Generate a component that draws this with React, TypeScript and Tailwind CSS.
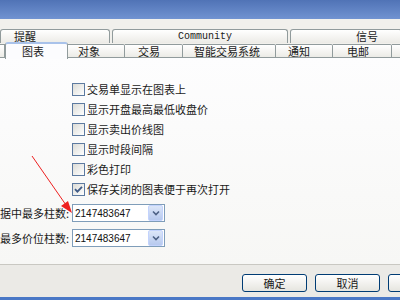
import React from 'react';

const cjk = { fontFamily: '"Noto Sans CJK SC", "Noto Sans", sans-serif' };

const topTabs = [
  { label: '提醒', w: 'w-[110px]', pad: 'pl-[13px]', mono: false },
  { label: 'Community', w: 'w-[176px]', pad: 'pl-[65px]', mono: true },
  { label: '信号', w: 'w-[112px]', pad: 'pl-[65px]', mono: false },
];

const tabs = [
  { label: '图表', w: 'w-[63px]', pad: 'pl-[16px]', active: true },
  { label: '对象', w: 'w-[57px]', pad: 'pl-[10px]', active: false },
  { label: '交易', w: 'w-[58px]', pad: 'pl-[13px]', active: false },
  { label: '智能交易系统', w: 'w-[93px]', pad: 'pl-[11px]', active: false },
  { label: '通知', w: 'w-[57px]', pad: 'pl-[12px]', active: false },
  { label: '电邮', w: 'w-[59px]', pad: 'pl-[14px]', active: false },
  { label: '', w: 'w-[20px]', pad: '', active: false },
];

const options = [
  { label: '交易单显示在图表上', checked: false },
  { label: '显示开盘最高最低收盘价', checked: false },
  { label: '显示卖出价线图', checked: false },
  { label: '显示时段间隔', checked: false },
  { label: '彩色打印', checked: false },
  { label: '保存关闭的图表便于再次打开', checked: true },
];

function Checkbox({ checked }: { checked: boolean }) {
  return (
    <div className="w-[13px] h-[13px] border border-[#5d7aa0] bg-gradient-to-br from-[#dcdcd7] to-white flex items-center justify-center shrink-0">
      {checked && (
        <svg width="9" height="9" viewBox="0 0 9 9">
          <path d="M1 4.2 L3.4 6.6 L8 1.8" stroke="#3f5a85" strokeWidth="1.8" fill="none" />
        </svg>
      )}
    </div>
  );
}

function Combo({ value }: { value: string }) {
  return (
    <div className="w-[93px] h-[18px] border border-[#7f9db9] bg-white flex items-center">
      <span className="flex-1 pl-[2px] text-[10px] text-[#111]" style={{ fontFamily: '"Liberation Sans", Arial, sans-serif' }}>
        {value}
      </span>
      <div className="w-[15px] h-[16px] mr-px rounded-[2px] bg-gradient-to-b from-[#dce6f8] to-[#b7c9ee] border border-[#c3d3fd] flex items-center justify-center">
        <svg width="8" height="6" viewBox="0 0 8 6">
          <path d="M1 1.5 L4 4.5 L7 1.5" stroke="#4d6185" strokeWidth="1.6" fill="none" />
        </svg>
      </div>
    </div>
  );
}

export default function App() {
  return (
    <div className="w-[400px] h-[300px] relative overflow-hidden bg-[#ecebe6] text-[#1a1a1a]" style={cjk}>
      {/* title bar */}
      <div className="h-[19px] bg-gradient-to-b from-[#5073b6] to-[#7193d1]" />
      <div className="h-[10px] bg-[#f1f0ec]" />

      {/* first tab row */}
      <div className="h-[14px] flex gap-[2px] bg-[#f1f0ec]">
        {topTabs.map((t, i) => (
          <div
            key={i}
            className={`${t.w} ${t.pad} shrink-0 h-full border border-b-0 border-[#919b9c] rounded-t-[3px] bg-gradient-to-b from-white to-[#ecebe6] flex items-center text-[11px] leading-none whitespace-nowrap`}
            style={t.mono ? { fontFamily: '"Liberation Mono", monospace', fontSize: '10px' } : undefined}
          >
            {t.label}
          </div>
        ))}
      </div>

      {/* second tab row */}
      <div className="h-[15px] flex items-end bg-[#f1f0ec] relative z-10">
        <div className="w-[5px] h-[14px] border-t border-r border-b border-[#919b9c] bg-gradient-to-b from-white to-[#ecebe6] shrink-0" />
        {tabs.map((t, i) =>
          t.active ? (
            <div
              key={i}
              className={`${t.w} ${t.pad} shrink-0 h-[17px] -mb-px border-x border-t-2 border-x-[#919b9c] border-t-[#a9c2ea] rounded-t-[3px] bg-[#fcfcfe] flex items-center text-[11px] leading-none`}
            >
              {t.label}
            </div>
          ) : (
            <div
              key={i}
              className={`${t.w} ${t.pad} shrink-0 h-[14px] border border-l-0 border-[#919b9c] rounded-tr-[2px] bg-gradient-to-b from-white to-[#ecebe6] flex items-center text-[11px] leading-none whitespace-nowrap`}
            >
              {t.label}
            </div>
          )
        )}
      </div>

      {/* tab page */}
      <div className="h-[207px] bg-gradient-to-b from-[#fdfdfe] to-[#f7f7f5] border-b border-[#c9c8c2] flex flex-col pt-[21px]">
        {options.map((o, i) => (
          <div key={i} className="h-[20px] flex items-center gap-[2px] ml-[72px] text-[11px] leading-none whitespace-nowrap">
            <Checkbox checked={o.checked} />
            <span>{o.label}</span>
          </div>
        ))}
        <div className="flex items-center mt-[5px]">
          <div className="w-[72px] pr-[5px] overflow-hidden whitespace-nowrap text-right text-[11px] leading-none">
            <span className="inline-block">据中最多柱数:</span>
          </div>
          <Combo value="2147483647" />
        </div>
        <div className="flex items-center mt-[7px]">
          <div className="w-[72px] pr-[5px] overflow-hidden whitespace-nowrap text-right text-[11px] leading-none">
            <span className="inline-block">最多价位柱数:</span>
          </div>
          <Combo value="2147483647" />
        </div>
      </div>

      {/* buttons */}
      <div className="h-[32px] bg-[#ebeae6] flex items-start pt-[9px] pl-[242px] gap-[8px] overflow-hidden">
        {['确定', '取消', ''].map((b, i) => (
          <div
            key={i}
            className="w-[65px] h-[18px] shrink-0 rounded-[3px] border border-[#003c74] bg-gradient-to-b from-white to-[#e6e5df] flex items-center justify-center text-[11px] leading-none"
          >
            {b}
          </div>
        ))}
      </div>
      <div className="h-[3px] bg-[#4a78c6]" />

      {/* red annotation arrow */}
      <svg className="absolute left-0 top-0 pointer-events-none" width="400" height="300" viewBox="0 0 400 300">
        <line x1="32" y1="156" x2="66" y2="205" stroke="#ee2020" strokeWidth="1" />
        <path d="M72 213 L61 206 L68 201 Z" fill="#ee2020" />
      </svg>
    </div>
  );
}
